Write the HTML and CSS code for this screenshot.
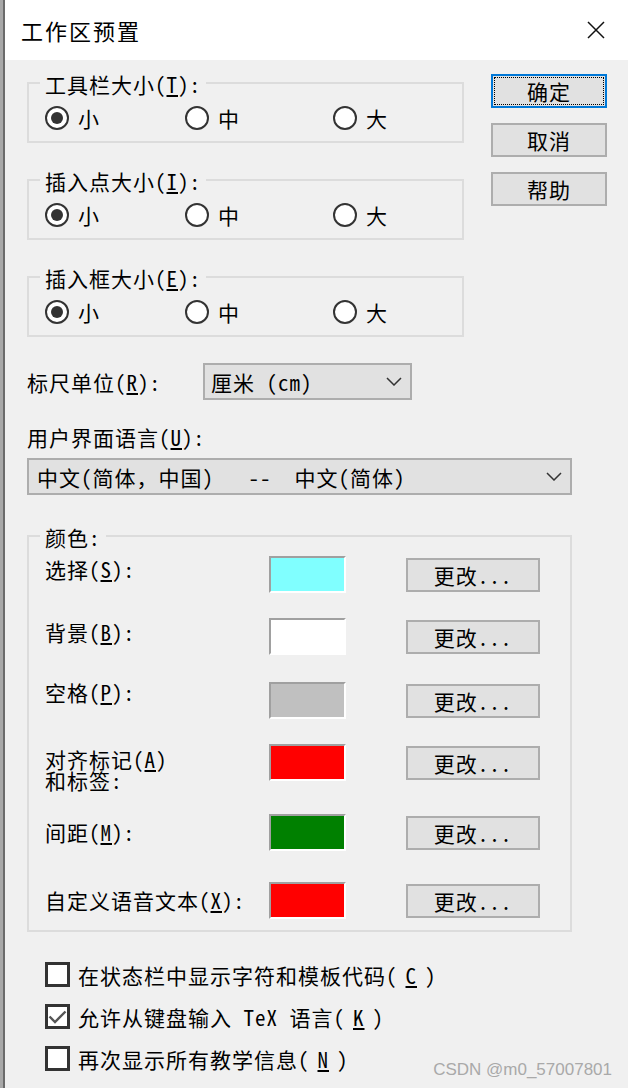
FILE: index.html
```html
<!DOCTYPE html>
<html lang="zh-CN">
<head>
<meta charset="utf-8">
<title>工作区预置</title>
<link rel="stylesheet" href="styles.css">
</head>
<body>
<div class="screen">
  <div class="backdrop"></div>
  <div class="dialog">
    <header class="titlebar">
      <h1 class="title">工作区预置</h1>
      <svg class="close" viewBox="0 0 18 18" width="18" height="18" aria-label="关闭"><path d="M1 1L17 17M17 1L1 17" fill="none" stroke="#111" stroke-width="1.5"/></svg>
    </header>
    <main class="content">
      <div class="top">
        <div class="groups">
          <section class="group">
            <div class="group-title">工具栏大小(<u>T</u>):</div>
            <div class="radios">
              <label class="radio"><span class="radio-dot on"></span>小</label>
              <label class="radio"><span class="radio-dot"></span>中</label>
              <label class="radio"><span class="radio-dot"></span>大</label>
            </div>
          </section>
          <section class="group">
            <div class="group-title">插入点大小(<u>I</u>):</div>
            <div class="radios">
              <label class="radio"><span class="radio-dot on"></span>小</label>
              <label class="radio"><span class="radio-dot"></span>中</label>
              <label class="radio"><span class="radio-dot"></span>大</label>
            </div>
          </section>
          <section class="group">
            <div class="group-title">插入框大小(<u>E</u>):</div>
            <div class="radios">
              <label class="radio"><span class="radio-dot on"></span>小</label>
              <label class="radio"><span class="radio-dot"></span>中</label>
              <label class="radio"><span class="radio-dot"></span>大</label>
            </div>
          </section>
        </div>
        <div class="actions">
          <div class="btn btn-default"><span class="focus">确定</span></div>
          <div class="btn">取消</div>
          <div class="btn">帮助</div>
        </div>
      </div>

      <div class="field-row">
        <span class="field-label">标尺单位(<u>R</u>):</span>
        <div class="select select-unit">
          <span>厘米 (cm)</span>
          <svg class="chev" viewBox="0 0 16 9" width="16" height="9"><path d="M1 1L8 8L15 1" fill="none" stroke="#333" stroke-width="1.5"/></svg>
        </div>
      </div>

      <div class="lang-label">用户界面语言(<u>U</u>):</div>
      <div class="select select-lang">
        <span class="pre">中文(简体，中国)   --  中文(简体)</span>
        <svg class="chev" viewBox="0 0 16 9" width="16" height="9"><path d="M1 1L8 8L15 1" fill="none" stroke="#333" stroke-width="1.5"/></svg>
      </div>

      <section class="group colors">
        <div class="group-title">颜色:</div>
        <div class="color-grid">
          <span class="clabel">选择(<u>S</u>):</span>
          <span class="swatch sw-cyan"></span>
          <div class="btn btn-change">更改...</div>

          <span class="clabel clabel-b">背景(<u>B</u>):</span>
          <span class="swatch sw-white"></span>
          <div class="btn btn-change">更改...</div>

          <span class="clabel clabel-up">空格(<u>P</u>):</span>
          <span class="swatch sw-gray"></span>
          <div class="btn btn-change">更改...</div>

          <span class="clabel clabel-two"><span class="cline">对齐标记(<u>A</u>)</span><span class="cline">和标签:</span></span>
          <span class="swatch sw-red"></span>
          <div class="btn btn-change">更改...</div>

          <span class="clabel clabel-down">间距(<u>M</u>):</span>
          <span class="swatch sw-green"></span>
          <div class="btn btn-change">更改...</div>

          <span class="clabel clabel-down">自定义语音文本(<u>X</u>):</span>
          <span class="swatch sw-red"></span>
          <div class="btn btn-change">更改...</div>
        </div>
      </section>

      <div class="checks">
        <label class="check"><span class="box"></span>在状态栏中显示字符和模板代码(<u>C</u>)</label>
        <label class="check"><span class="box"><svg viewBox="0 0 19 19" width="19" height="19"><path d="M1.5 9.5L7 15L17.5 4.5" fill="none" stroke="#555" stroke-width="2.4"/></svg></span>允许从键盘输入 TeX 语言(<u>K</u>)</label>
        <label class="check"><span class="box"></span>再次显示所有教学信息(<u>N</u>)</label>
      </div>
    </main>
  </div>
  <div class="watermark">CSDN @m0_57007801</div>
</div>
</body>
</html>
```

FILE: styles.css
```css
* { box-sizing: border-box; }

html, body {
  margin: 0;
  padding: 0;
}

body {
  width: 628px;
  height: 1088px;
  overflow: hidden;
  background: #a8a8a8;
  font-family: "Noto Sans Mono CJK SC", "Noto Sans CJK SC", sans-serif;
  font-size: 21px;
  letter-spacing: 1px;
  color: #000;
}

.screen {
  position: relative;
  display: flex;
  height: 1088px;
}

.backdrop {
  flex: none;
  width: 3px;
  background: #a8a8a8;
}

.dialog {
  flex: 1;
  display: flex;
  flex-direction: column;
  border-left: 2px solid #6b6b6b;
  background: #f0f0f0;
}

.titlebar {
  flex: none;
  height: 60px;
  display: flex;
  align-items: center;
  justify-content: space-between;
  padding: 0 23px 0 16px;
  background: #fff;
}

.title {
  margin: 0;
  font-size: 22px;
  font-weight: 400;
  letter-spacing: 2px;
  line-height: 30px;
}

.close {
  display: block;
}

.content {
  padding: 14px 0 0 22px;
}

.top {
  display: flex;
  gap: 27px;
}

.groups {
  width: 437px;
  margin-top: 8px;
  display: flex;
  flex-direction: column;
  gap: 36px;
}

.group {
  border: 2px solid #dcdcdc;
  padding: 0 0 11px 16px;
}

.group-title {
  width: fit-content;
  height: 24px;
  margin: -12px 0 0 -5px;
  padding: 0 5px;
  line-height: 24px;
  background: #f0f0f0;
  white-space: nowrap;
}

.radios {
  display: grid;
  grid-template-columns: 140px 148px auto;
  margin-top: 10px;
}

.radio {
  display: flex;
  align-items: center;
  gap: 9px;
  height: 24px;
  line-height: 24px;
}

.radio-dot {
  flex: none;
  width: 24px;
  height: 24px;
  border-radius: 50%;
  border: 2px solid #333;
  background: #fff;
  display: flex;
  align-items: center;
  justify-content: center;
}

.radio-dot.on::after {
  content: "";
  width: 12px;
  height: 12px;
  border-radius: 50%;
  background: #333;
}

.actions {
  width: 116px;
  display: flex;
  flex-direction: column;
  gap: 15px;
}

.btn {
  height: 34px;
  border: 2px solid #adadad;
  background: #e1e1e1;
  display: flex;
  align-items: center;
  justify-content: center;
  line-height: 24px;
  white-space: nowrap;
}

.btn-default {
  border-color: #0078d7;
  padding: 1px;
}

.focus {
  flex: 1;
  align-self: stretch;
  display: flex;
  align-items: center;
  justify-content: center;
  border: 1px dotted #000;
}

.field-row {
  display: flex;
  align-items: center;
  margin-top: 26px;
}

.field-label {
  width: 176px;
  line-height: 24px;
}

.select {
  height: 37px;
  border: 2px solid #adadad;
  background: #e1e1e1;
  display: flex;
  align-items: center;
  justify-content: space-between;
  line-height: 24px;
}

.select-unit {
  width: 209px;
  padding: 0 8px 0 6px;
}

.select-lang {
  width: 545px;
  margin-top: 9px;
  padding: 0 8px 0 8px;
}

.pre {
  white-space: pre;
}

.chev {
  display: block;
}

.lang-label {
  margin-top: 25px;
  line-height: 24px;
}

.colors {
  width: 545px;
  margin-top: 40px;
}

.color-grid {
  display: grid;
  grid-template-columns: 224px 137px 134px;
  grid-template-rows: 62px 64px 62px 70px 68px 37px;
  margin-top: 7px;
  align-items: start;
}

.clabel {
  margin-top: 1px;
  line-height: 24px;
  white-space: nowrap;
}

.clabel-b { margin-top: 2px; }
.clabel-up { margin-top: -2px; }
.clabel-down { margin-top: 6px; }

.clabel-two {
  margin-top: 5px;
  display: flex;
  flex-direction: column;
}

.cline {
  display: block;
  height: 21px;
  line-height: 21px;
}

.swatch {
  width: 77px;
  height: 37px;
  border: 2px solid;
  border-color: #a0a0a0 #fff #fff #a0a0a0;
}

.sw-cyan { background: #80ffff; }
.sw-white { background: #fff; }
.sw-gray { background: #c0c0c0; }
.sw-red { background: #ff0000; }
.sw-green { background: #008000; }

.btn-change {
  margin-top: 2px;
}

.checks {
  margin-top: 30px;
  display: flex;
  flex-direction: column;
  gap: 17px;
  padding-left: 18px;
}

.check {
  display: flex;
  align-items: center;
  gap: 8px;
  height: 25px;
  line-height: 24px;
  white-space: nowrap;
}

.box {
  flex: none;
  width: 25px;
  height: 25px;
  border: 3px solid #333;
  background: #fff;
}

.box svg {
  display: block;
}

.watermark {
  position: absolute;
  right: 16px;
  top: 1060px;
  font-family: "Liberation Sans", Arial, sans-serif;
  font-size: 17px;
  letter-spacing: 0;
  line-height: 20px;
  color: #a9a9a9;
}
```
